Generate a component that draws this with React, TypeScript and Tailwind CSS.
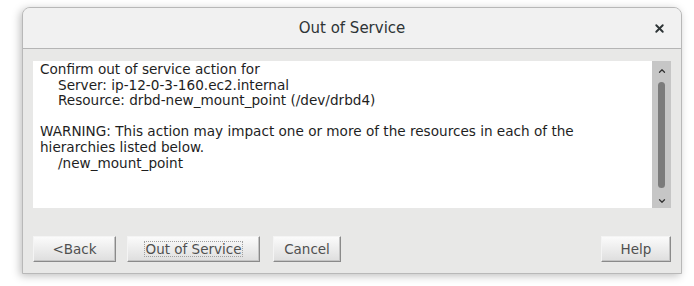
import { ChevronDown, ChevronUp, X } from "lucide-react";

const font = { fontFamily: '"DejaVu Sans", Verdana, sans-serif' };

function Btn({ label, focus, className }: { label: string; focus?: boolean; className?: string }) {
  return (
    <button
      className={
        "h-[26px] flex items-center justify-center text-[13.5px] text-[#505050] bg-gradient-to-b from-[#fbfbfb] to-[#dedede] border border-t-[#f4f4f4] border-l-[#f4f4f4] border-r-[#8a8a8a] border-b-[#8a8a8a] shadow-[inset_-1px_-1px_0_#c4c4c4] " +
        (className ?? "")
      }
    >
      <span className={focus ? "outline outline-1 outline-dotted outline-[#a0a0a0] px-[1px] leading-[14px]" : ""}>
        {label}
      </span>
    </button>
  );
}

export default function App() {
  return (
    <div className="w-[694px] h-[286px] bg-white pt-[7px] pl-[22px]" style={font}>
      <div className="w-[660px] h-[267px] rounded-t-[8px] border border-[#b8b8b8] bg-[#e8e8e7] shadow-[-2px_2px_8px_rgba(0,0,0,0.25)] flex flex-col overflow-hidden">
        {/* title bar */}
        <div className="h-[41px] shrink-0 bg-[#f1f1f1] border-b border-[#b5b5b5] flex items-center relative">
          <div className="flex-1 text-center text-[15px] text-[#2e3436] font-medium">Out of Service</div>
          <X className="absolute right-[15px] top-[14px] w-[13px] h-[13px] text-[#2e3436]" strokeWidth={3.5} />
        </div>

        {/* text area */}
        <div className="mt-[12px] mx-[10px] h-[147px] flex">
          <div className="flex-1 bg-white pl-[7px] pt-[1px] text-[13.6px] leading-[15.6px] text-[#1e1e1e]">
            <div>Confirm out of service action for</div>
            <div className="pl-[18px]">Server: ip-12-0-3-160.ec2.internal</div>
            <div className="pl-[18px]">Resource: drbd-new_mount_point (/dev/drbd4)</div>
            <div>&nbsp;</div>
            <div>WARNING: This action may impact one or more of the resources in each of the</div>
            <div>hierarchies listed below.</div>
            <div className="pl-[18px]">/new_mount_point</div>
          </div>
          <div className="w-[19px] bg-[#c6c6c6] flex flex-col items-center">
            <ChevronUp className="w-[10px] h-[10px] mt-[5px] text-[#333]" strokeWidth={3} />
            <div className="w-[7px] h-[106px] mt-[6px] rounded-full bg-[#7b7b7b]" />
            <ChevronDown className="w-[10px] h-[10px] mt-[8px] text-[#333]" strokeWidth={3} />
          </div>
        </div>

        {/* buttons */}
        <div className="mt-[28px] mx-[10px] flex">
          <Btn label="<Back" className="w-[83px]" />
          <Btn label="Out of Service" focus className="w-[133px] ml-[11px]" />
          <Btn label="Cancel" className="w-[68px] ml-[13px]" />
          <div className="flex-1" />
          <Btn label="Help" className="w-[70px]" />
        </div>
      </div>
    </div>
  );
}
